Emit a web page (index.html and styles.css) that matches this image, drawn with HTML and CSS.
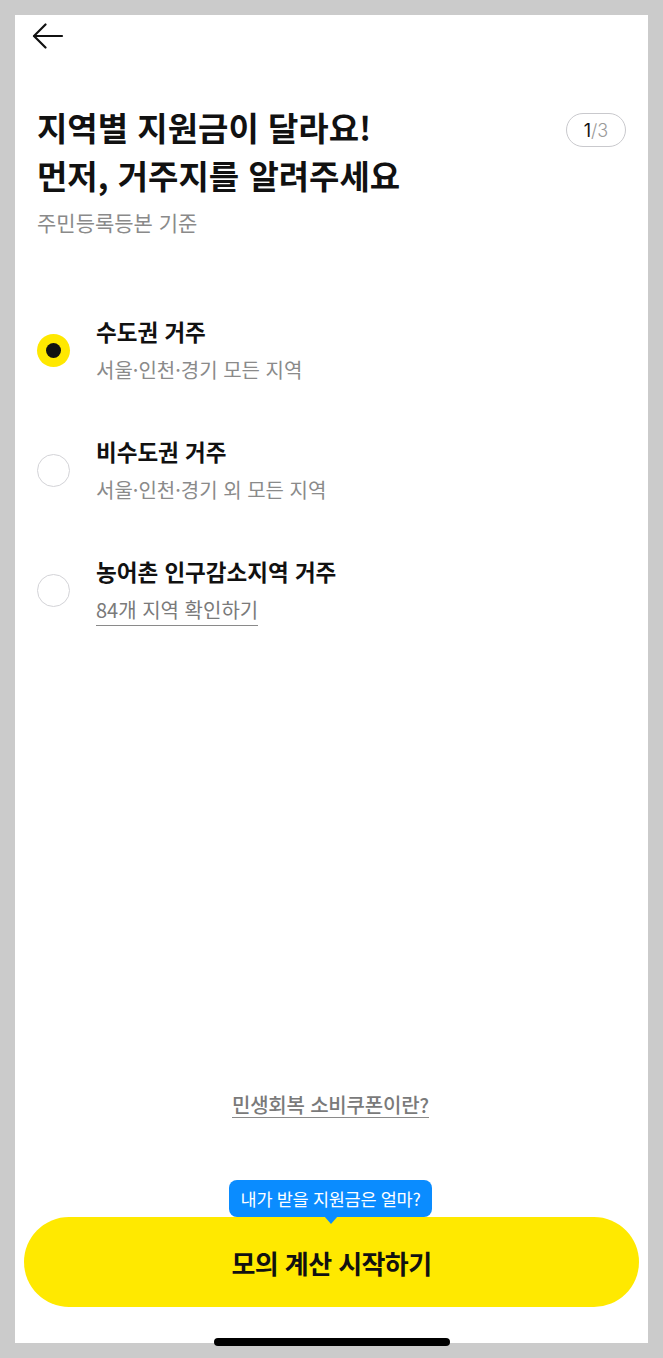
FILE: index.html
```html
<!DOCTYPE html>
<html lang="ko">
<head>
<meta charset="utf-8">
<title>거주지 선택</title>
<link rel="stylesheet" href="styles.css">
</head>
<body>
<main class="screen">
  <header class="topbar">
    <button class="back" aria-label="뒤로">
      <svg width="32" height="26" viewBox="0 0 32 26" fill="none" stroke="#111" stroke-width="2.2" stroke-linecap="round" stroke-linejoin="round">
        <path d="M30 13H2.5"/>
        <path d="M13.5 1.5L2 13l11.5 11.5"/>
      </svg>
    </button>
  </header>

  <section class="intro">
    <div class="intro-text">
      <h1 class="title">지역별 지원금이 달라요!<br>먼저, 거주지를 알려주세요</h1>
      <p class="subtitle">주민등록등본 기준</p>
    </div>
    <span class="step"><b>1</b>/3</span>
  </section>

  <ul class="options">
    <li class="option selected">
      <span class="radio"></span>
      <div class="opt-body">
        <p class="opt-title">수도권 거주</p>
        <p class="opt-sub">서울·인천·경기 모든 지역</p>
      </div>
    </li>
    <li class="option">
      <span class="radio"></span>
      <div class="opt-body">
        <p class="opt-title">비수도권 거주</p>
        <p class="opt-sub">서울·인천·경기 외 모든 지역</p>
      </div>
    </li>
    <li class="option">
      <span class="radio"></span>
      <div class="opt-body">
        <p class="opt-title">농어촌 인구감소지역 거주</p>
        <p class="opt-sub"><a class="opt-link" href="#">84개 지역 확인하기</a></p>
      </div>
    </li>
  </ul>

  <div class="spacer"></div>

  <a class="info-link" href="#">민생회복 소비쿠폰이란?</a>

  <div class="cta">
    <div class="tooltip">내가 받을 지원금은 얼마?</div>
    <button class="cta-btn">모의 계산 시작하기</button>
  </div>
</main>
<div class="home-indicator"></div>
</body>
</html>
```

FILE: styles.css
```css
* { box-sizing: border-box; }
html, body {
  margin: 0;
  padding: 0;
  background: #cbcbcb;
}
body {
  width: 663px;
  height: 1358px;
  padding: 15px;
  position: relative;
  font-family: "Noto Sans CJK KR", "Noto Sans", sans-serif;
  color: #111;
}
p { margin: 0; }

.screen {
  width: 633px;
  height: 1328px;
  background: #fff;
  display: flex;
  flex-direction: column;
}

.topbar {
  height: 42px;
  display: flex;
  align-items: flex-start;
  padding: 8px 0 0 17px;
}
.back {
  border: 0;
  background: none;
  padding: 0;
  width: 32px;
  height: 26px;
  display: block;
}
.back svg { display: block; }

.intro {
  display: flex;
  justify-content: space-between;
  align-items: flex-start;
  padding: 46px 22px 0 22px;
}
.title {
  margin: 0;
  font-size: 33px;
  line-height: 48px;
  font-weight: 700;
  letter-spacing: 0;
  color: #111;
}
.subtitle {
  margin-top: 9px;
  font-size: 21px;
  line-height: 28px;
  color: #8a8a8a;
}
.step {
  margin-top: 10px;
  width: 60px;
  height: 34px;
  border: 1.5px solid #c9c9cd;
  border-radius: 17px;
  display: flex;
  align-items: center;
  justify-content: center;
  font-size: 18px;
  color: #9a9a9a;
  font-family: "Inter", "Noto Sans", sans-serif;
  font-weight: 300;
}
.step b { color: #111; font-weight: 400; }

.options {
  list-style: none;
  margin: 80px 0 0;
  padding: 0 22px;
  display: flex;
  flex-direction: column;
  gap: 52px;
}
.option {
  display: flex;
  align-items: center;
  gap: 26px;
}
.radio {
  flex: none;
  width: 33px;
  height: 33px;
  border-radius: 50%;
  border: 1.5px solid #d3d3d7;
  display: flex;
  align-items: center;
  justify-content: center;
}
.option.selected .radio {
  border: 0;
  background: #ffe800;
}
.option.selected .radio::after {
  content: "";
  width: 15px;
  height: 15px;
  border-radius: 50%;
  background: #111;
}
.opt-body {
  display: flex;
  flex-direction: column;
  gap: 10px;
}
.opt-title {
  font-size: 22.5px;
  line-height: 30px;
  font-weight: 700;
  color: #111;
}
.opt-sub {
  font-size: 20px;
  line-height: 28px;
  color: #8a8a8a;
}
.opt-link {
  color: #7a7a7a;
  text-decoration: none;
  border-bottom: 1.5px solid #8a8a8a;
  padding-bottom: 1px;
}

.spacer { flex: 1; }

.info-link {
  align-self: center;
  font-size: 20px;
  line-height: 24px;
  font-weight: 500;
  color: #7a7a7a;
  text-decoration: none;
  border-bottom: 1.5px solid #8a8a8a;
  letter-spacing: -0.2px;
  margin-bottom: 62px;
  margin-right: 2px;
}

.cta {
  display: flex;
  flex-direction: column;
  align-items: center;
  padding: 0 9px 36px;
}
.tooltip {
  position: relative;
  z-index: 1;
  height: 37px;
  padding: 0 12px;
  border-radius: 8px;
  background: #0a8cff;
  color: #fff;
  font-size: 17.5px;
  line-height: 37px;
  letter-spacing: -0.3px;
  margin-left: -2px;
}
.tooltip::after {
  content: "";
  position: absolute;
  left: 50%;
  bottom: -7px;
  margin-left: -7px;
  border-left: 7px solid transparent;
  border-right: 7px solid transparent;
  border-top: 8px solid #0a8cff;
}
.cta-btn {
  width: 100%;
  height: 90px;
  border: 0;
  border-radius: 45px;
  background: #ffe900;
  font-family: inherit;
  font-size: 26px;
  font-weight: 700;
  color: #111;
  letter-spacing: -0.6px;
}

.home-indicator {
  position: absolute;
  left: 214px;
  top: 1338px;
  width: 236px;
  height: 8px;
  border-radius: 4px;
  background: #000;
}
```
